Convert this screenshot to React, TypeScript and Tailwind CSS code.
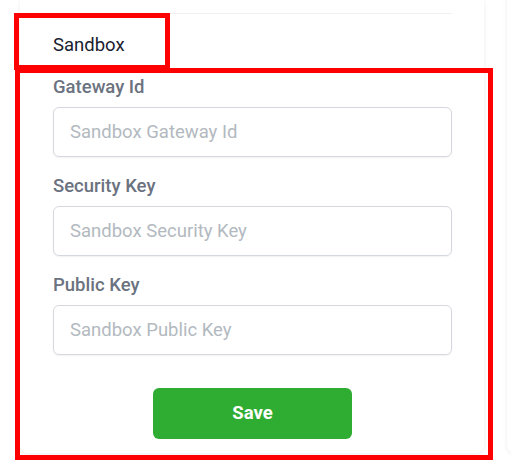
import React from "react"

const fields = [
	{ label: "Gateway Id", placeholder: "Sandbox Gateway Id" },
	{ label: "Security Key", placeholder: "Sandbox Security Key" },
	{ label: "Public Key", placeholder: "Sandbox Public Key" },
]

const App: React.FC = () => {
	return (
		<div
			className="relative flex h-[475px] w-[511px] overflow-hidden bg-white"
			style={{ fontFamily: "Roboto, 'Liberation Sans', sans-serif" }}
		>
			<div className="ml-[20px] flex h-[453px] w-[464px] shrink-0 flex-col rounded-b-lg bg-white shadow-[0_1px_4px_rgba(15,23,42,0.08)]">
				<div className="mt-[13px] h-px w-[432px] bg-[#eef0f2]" />
				<div className="px-[33px] pt-[19px] pb-[18px] text-[18.5px] leading-[24px] text-[#1a2130]">
					Sandbox
				</div>
				<div className="flex flex-col gap-[17px] px-[33px]">
					{fields.map((f) => (
						<div key={f.label} className="flex flex-col gap-[8px]">
							<label className="text-[18.5px] leading-[24px] font-medium text-[#6b7280]">
								{f.label}
							</label>
							<input
								placeholder={f.placeholder}
								className="h-[50px] w-[399px] rounded-md border border-[#d5d8de] px-[16px] text-[18.5px] shadow-[0_1px_2px_rgba(0,0,0,0.06)] outline-none placeholder:text-[#b3b9c0]"
							/>
						</div>
					))}
				</div>
				<div className="mt-[33px] flex justify-center pl-[1px]">
					<button className="h-[51px] w-[199px] rounded-md bg-[#2fad33] text-[18.5px] font-bold text-white">
						Save
					</button>
				</div>
			</div>
			<div className="mt-[-10px] ml-[23px] h-[463px] w-[40px] shrink-0 rounded-bl-lg bg-white shadow-[0_1px_4px_rgba(15,23,42,0.08)]" />
			<div className="pointer-events-none absolute top-[13px] left-[14px] h-[57px] w-[156px] border-[5px] border-[#ff0000]" />
			<div className="pointer-events-none absolute top-[68px] left-[15px] h-[392px] w-[478px] border-[5px] border-[#ff0000]" />
		</div>
	)
}

export default App
